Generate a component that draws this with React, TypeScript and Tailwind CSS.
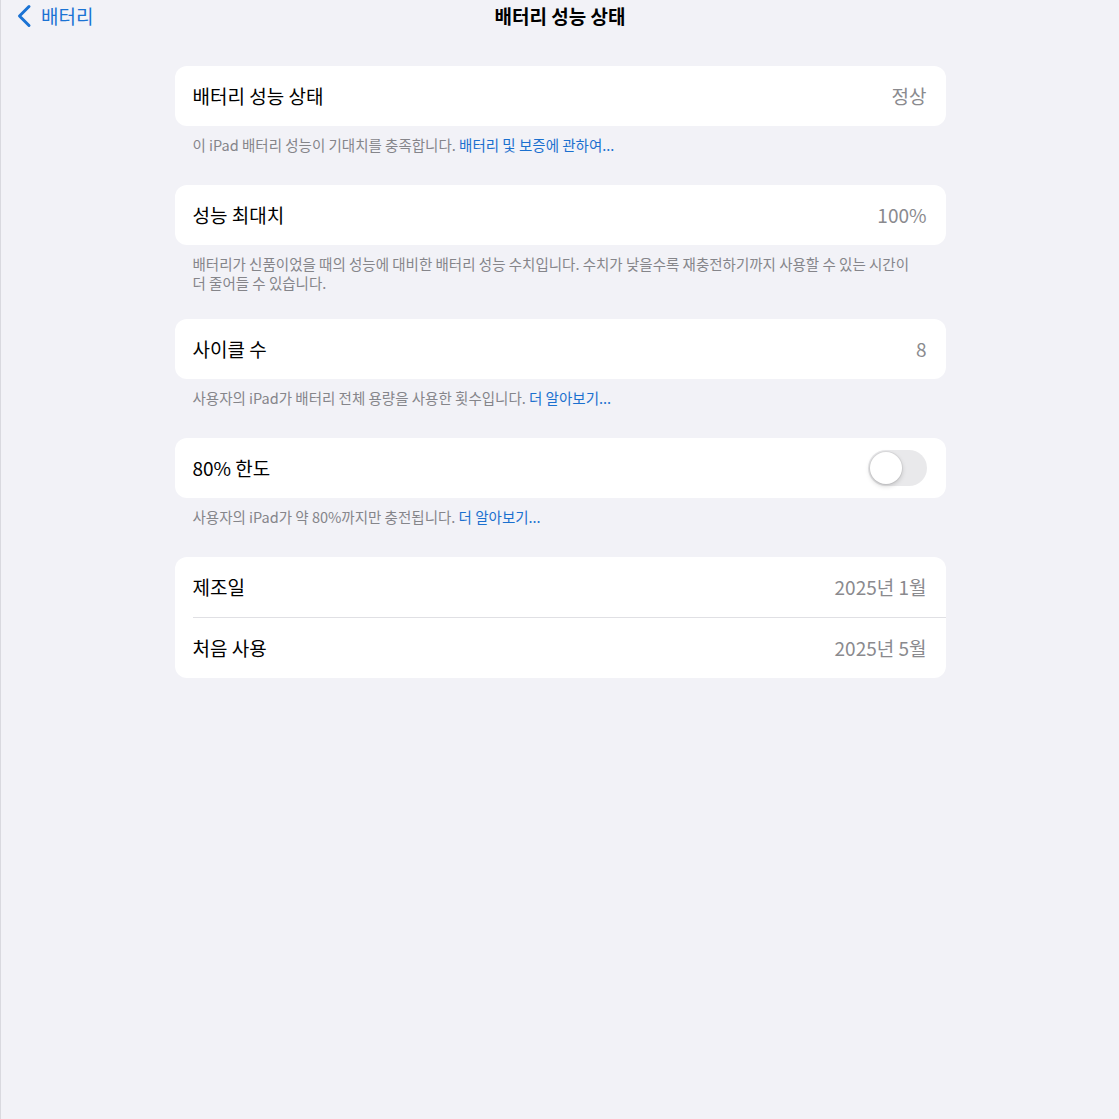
import React from "react";

const font = { fontFamily: '"Noto Sans CJK KR", "Noto Sans", sans-serif' };

function Row({ label, value, children }: { label: string; value?: string; children?: React.ReactNode }) {
  return (
    <div className="flex h-[60px] items-center justify-between pl-[18px] pr-[19px]">
      <span className="text-[19px] text-black">{label}</span>
      {value !== undefined ? <span className="text-[19px] text-[#8a8a8e]">{value}</span> : children}
    </div>
  );
}

function Footer({ children, tight }: { children: React.ReactNode; tight?: boolean }) {
  return (
    <p
      className={
        tight
          ? "px-[18px] pt-[9px] pb-[27px] text-[14.5px] leading-[19px] text-[#85858a]"
          : "px-[18px] pt-[9px] pb-[31px] text-[14.5px] leading-[19px] text-[#85858a]"
      }
    >
      {children}
    </p>
  );
}

function Toggle() {
  return (
    <div className="flex h-[36px] w-[59px] items-center rounded-full bg-[#e9e9eb] p-[2px]">
      <div className="h-[32px] w-[32px] rounded-full bg-white shadow-[0_2px_5px_rgba(0,0,0,0.18)] ring-1 ring-black/5" />
    </div>
  );
}

export default function App() {
  return (
    <div style={font} className="min-h-[1119px] w-full border-l border-[#d9d9df] bg-[#f2f2f7]">
      {/* 상단 내비게이션 */}
      <div className="relative flex h-[32px] items-center">
        <div className="flex items-center gap-[9px] pl-[15px] text-[#1b73d4]">
          <svg width="16" height="24" viewBox="0 0 16 24" fill="none">
            <path d="M13 2.5 L3.5 12 L13 21.5" stroke="currentColor" strokeWidth="3" strokeLinecap="round" strokeLinejoin="round" />
          </svg>
          <span className="text-[19px]">배터리</span>
        </div>
        <h1 className="absolute left-1/2 -translate-x-1/2 text-[19px] font-bold text-black">배터리 성능 상태</h1>
      </div>

      <div className="mx-auto mt-[34px] w-[771px]">
        <div className="rounded-[12px] bg-white">
          <Row label="배터리 성능 상태" value="정상" />
        </div>
        <Footer>
          이 iPad 배터리 성능이 기대치를 충족합니다. <span className="text-[#1b70cf]">배터리 및 보증에 관하여...</span>
        </Footer>

        <div className="rounded-[12px] bg-white">
          <Row label="성능 최대치" value="100%" />
        </div>
        <Footer tight>
          배터리가 신품이었을 때의 성능에 대비한 배터리 성능 수치입니다. 수치가 낮을수록 재충전하기까지 사용할 수 있는 시간이
          <br />더 줄어들 수 있습니다.
        </Footer>

        <div className="rounded-[12px] bg-white">
          <Row label="사이클 수" value="8" />
        </div>
        <Footer>
          사용자의 iPad가 배터리 전체 용량을 사용한 횟수입니다. <span className="text-[#1b70cf]">더 알아보기...</span>
        </Footer>

        <div className="rounded-[12px] bg-white">
          <Row label="80% 한도">
            <Toggle />
          </Row>
        </div>
        <Footer>
          사용자의 iPad가 약 80%까지만 충전됩니다. <span className="text-[#1b70cf]">더 알아보기...</span>
        </Footer>

        <div className="rounded-[12px] bg-white">
          <Row label="제조일" value="2025년 1월" />
          <div className="ml-[18px] h-px bg-[#e0e0e4]" />
          <Row label="처음 사용" value="2025년 5월" />
        </div>
      </div>
    </div>
  );
}
